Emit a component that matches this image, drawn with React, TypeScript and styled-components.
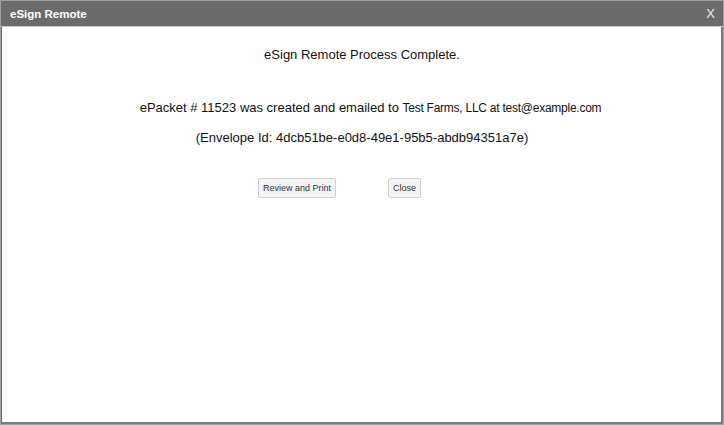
import React from "react";
import styled, { createGlobalStyle } from "styled-components";

const Global = createGlobalStyle`
  html, body { margin: 0; padding: 0; background: #fff; }
  body { font-family: "Liberation Sans", Arial, sans-serif; }
`;

const Dialog = styled.div`
  box-sizing: border-box;
  width: 724px;
  height: 425px;
  border: 1px solid #a0a0a0;
  box-shadow: inset 1px 1px 0 #6a6a6a, inset -2px -2px 0 #7a7a7a;
  display: flex;
  flex-direction: column;
  background: #fff;
`;

const TitleBar = styled.div`
  height: 25px;
  background: #6b6b6b;
  border-bottom: 1px solid #c8c8c8;
  display: flex;
  align-items: center;
  justify-content: space-between;
  padding: 0 8px 0 9px;
  color: #fff;
  font-size: 11.5px;
`;

const Title = styled.span`
  font-weight: bold;
`;

const CloseX = styled.span`
  font-size: 13px;
  color: #eee;
`;

const Body = styled.div`
  flex: 1;
  display: flex;
  flex-direction: column;
  align-items: center;
  padding-top: 19px;
  color: #111;
`;

const Heading = styled.div`
  font-size: 13px;
  line-height: 17px;
`;

const Line = styled.div<{ $mt: number; $shift?: number }>`
  margin-top: ${(p) => p.$mt}px;
  padding-left: ${(p) => p.$shift ?? 0}px;
  font-size: 13px;
  line-height: 17px;
`;

const Small = styled.span`
  font-size: 12px;
  letter-spacing: -0.25px;
`;

const Buttons = styled.div`
  margin-top: 32px;
  display: flex;
  gap: 52px;
  margin-right: 45px;
`;

const Button = styled.button`
  font-family: "Liberation Sans", Arial, sans-serif;
  font-size: 9px;
  height: 20px;
  padding: 0 4px;
  background: #f4f4f4;
  border: 1px solid #cfcfcf;
  border-radius: 2px;
  color: #333;
`;

export default function App() {
  return (
    <>
      <Global />
      <Dialog>
        <TitleBar>
          <Title>eSign Remote</Title>
          <CloseX>X</CloseX>
        </TitleBar>
        <Body>
          <Heading>eSign Remote Process Complete.</Heading>
          <Line $mt={36} $shift={17}>
            ePacket # 11523 was created and emailed to <Small>Test Farms, LLC at test@example.com</Small>
          </Line>
          <Line $mt={12}>(Envelope Id: 4dcb51be-e0d8-49e1-95b5-abdb94351a7e)</Line>
          <Buttons>
            <Button>Review and Print</Button>
            <Button>Close</Button>
          </Buttons>
        </Body>
      </Dialog>
    </>
  );
}
